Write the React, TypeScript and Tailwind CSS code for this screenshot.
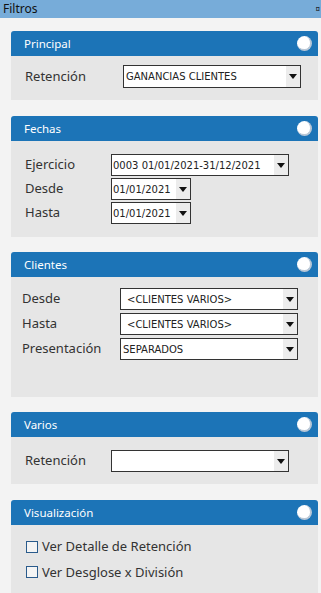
import React from 'react';

const labelFont = "font-['Noto_Sans',sans-serif]";
const inputFont = "font-['DejaVu_Sans',sans-serif]";

function Panel({ title, bodyClass, children }: { title: string; bodyClass: string; children: React.ReactNode }) {
  return (
    <div className="ml-[11px] w-[307px]">
      <div className="flex h-[25px] items-center justify-between rounded-t-[3px] bg-[#1c74b7] pl-[13px] pr-[6px]">
        <span className={`${labelFont} text-[11.5px] text-white`}>{title}</span>
        <div className="h-[15px] w-[15px] rounded-full border-r-2 border-b-2 border-[#b9c7d6] bg-white" />
      </div>
      <div className={`bg-[#e6e6e6] ${bodyClass}`}>{children}</div>
    </div>
  );
}

function Select({ value, w, h = 'h-[22px]', pl = 'pl-[2px]' }: { value: string; w: string; h?: string; pl?: string }) {
  return (
    <div className={`flex ${h} ${w} items-stretch border border-[#333] bg-white`}>
      <span className={`${inputFont} flex flex-1 items-center ${pl} text-[10px] whitespace-nowrap text-[#222] overflow-hidden`}>{value}</span>
      <div className="flex w-[14px] items-center justify-center bg-[#ececec]">
        <svg width="8" height="5" viewBox="0 0 8 5">
          <path d="M0 0h8L4 5z" fill="#111" />
        </svg>
      </div>
    </div>
  );
}

function Label({ text, w }: { text: string; w: string }) {
  return <span className={`${labelFont} ${w} text-[13px] text-[#333]`}>{text}</span>;
}

function Check({ text }: { text: string }) {
  return (
    <div className="flex items-center gap-[4px]">
      <div className="h-[12px] w-[12px] border border-[#2a5b8c] bg-[#f4f4f4]" />
      <span className={`${labelFont} text-[13px] text-[#333]`}>{text}</span>
    </div>
  );
}

export default function App() {
  return (
    <div className="h-[593px] w-[321px] overflow-hidden bg-[#f3f3f3]">
      {/* Title bar */}
      <div className="flex h-[18px] items-center justify-between bg-[#77acd9] pl-[3px] pr-[1px]">
        <span className={`${labelFont} text-[12px] text-[#111]`}>Filtros</span>
        <span className="text-[8px] leading-none text-[#111]">¤</span>
      </div>

      <div className="mt-[13px] flex flex-col">
        <Panel title="Principal" bodyClass="h-[44px] pt-[9px] pl-[14px]">
          <div className="flex items-center">
            <Label text="Retención" w="w-[98px]" />
            <Select value="GANANCIAS CLIENTES" w="w-[178px]" h="h-[23px]" />
          </div>
        </Panel>

        <div className="h-[16px]" />
        <Panel title="Fechas" bodyClass="h-[96px] pt-[13px] pl-[14px] flex flex-col gap-[2px]">
          <div className="flex items-center">
            <Label text="Ejercicio" w="w-[86px]" />
            <Select value="0003 01/01/2021-31/12/2021" w="w-[178px]" pl="pl-[1px]" />
          </div>
          <div className="flex items-center">
            <Label text="Desde" w="w-[86px]" />
            <Select value="01/01/2021" w="w-[80px]" pl="pl-[1px]" />
          </div>
          <div className="flex items-center">
            <Label text="Hasta" w="w-[86px]" />
            <Select value="01/01/2021" w="w-[80px]" pl="pl-[1px]" />
          </div>
        </Panel>

        <div className="h-[15px]" />
        <Panel title="Clientes" bodyClass="h-[120px] pt-[11px] pl-[11px] flex flex-col gap-[3px]">
          <div className="flex items-center">
            <Label text="Desde" w="w-[98px]" />
            <Select value="<CLIENTES VARIOS>" w="w-[178px]" h="h-[22px]" pl="pl-[6px]" />
          </div>
          <div className="flex items-center">
            <Label text="Hasta" w="w-[98px]" />
            <Select value="<CLIENTES VARIOS>" w="w-[178px]" h="h-[22px]" pl="pl-[6px]" />
          </div>
          <div className="flex items-center">
            <Label text="Presentación" w="w-[98px]" />
            <Select value="SEPARADOS" w="w-[178px]" h="h-[22px]" />
          </div>
        </Panel>

        <div className="h-[15px]" />
        <Panel title="Varios" bodyClass="h-[47px] pt-[13px] pl-[14px]">
          <div className="flex items-center">
            <Label text="Retención" w="w-[86px]" />
            <Select value="" w="w-[178px]" h="h-[22px]" />
          </div>
        </Panel>

        <div className="h-[16px]" />
        <Panel title="Visualización" bodyClass="h-[80px] pt-[12px] pl-[15px] flex flex-col gap-[6px]">
          <Check text="Ver Detalle de Retención" />
          <Check text="Ver Desglose x División" />
        </Panel>
      </div>
    </div>
  );
}
